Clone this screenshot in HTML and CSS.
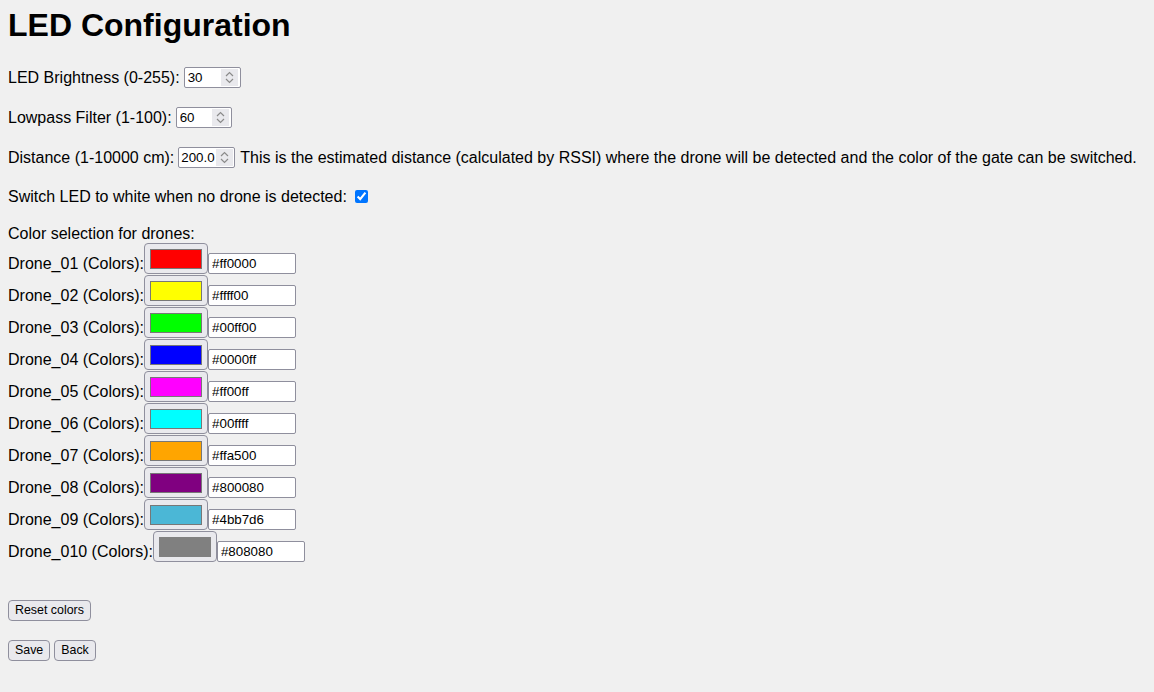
FILE: index.html
```html
<!DOCTYPE html>
<html lang="en">
<head>
<meta charset="utf-8">
<title>LED Configuration</title>
<link rel="stylesheet" href="styles.css">
</head>
<body>
<main class="page">
  <h1 class="title">LED Configuration</h1>

  <div class="row row-first">
    <label class="lbl" for="bright">LED Brightness (0-255):</label>
    <span class="num num-w57">
      <input class="num-field" id="bright" type="text" value="30">
      <svg class="spin" width="17" height="17" viewBox="0 0 17 17"><path d="M5 7 L8.5 3.5 L12 7 M5 10 L8.5 13.5 L12 10" fill="none" stroke="#8a8a8a" stroke-width="1.2"/></svg>
    </span>
  </div>

  <div class="row row-next">
    <label class="lbl" for="lowpass">Lowpass Filter (1-100):</label>
    <span class="num num-w56">
      <input class="num-field" id="lowpass" type="text" value="60">
      <svg class="spin" width="17" height="17" viewBox="0 0 17 17"><path d="M5 7 L8.5 3.5 L12 7 M5 10 L8.5 13.5 L12 10" fill="none" stroke="#8a8a8a" stroke-width="1.2"/></svg>
    </span>
  </div>

  <div class="row row-next">
    <label class="lbl" for="dist">Distance (1-10000 cm):</label>
    <span class="num num-w57 num-dist">
      <input class="num-field" id="dist" type="text" value="200.0">
      <svg class="spin" width="17" height="17" viewBox="0 0 17 17"><path d="M5 7 L8.5 3.5 L12 7 M5 10 L8.5 13.5 L12 10" fill="none" stroke="#8a8a8a" stroke-width="1.2"/></svg>
    </span>
    <span class="note">This is the estimated distance (calculated by RSSI) where the drone will be detected and the color of the gate can be switched.</span>
  </div>

  <div class="row row-check">
    <label class="lbl" for="white">Switch LED to white when no drone is detected:</label>
    <input class="check" id="white" type="checkbox" checked>
  </div>

  <div class="section-label">Color selection for drones:</div>

  <div class="drones">
    <div class="drone"><span class="dlbl">Drone_01 (Colors):</span><button class="swatch-btn" type="button"><span class="swatch" style="background:#ff0000"></span></button><input class="hex" type="text" value="#ff0000"></div>
    <div class="drone"><span class="dlbl">Drone_02 (Colors):</span><button class="swatch-btn" type="button"><span class="swatch" style="background:#ffff00"></span></button><input class="hex" type="text" value="#ffff00"></div>
    <div class="drone"><span class="dlbl">Drone_03 (Colors):</span><button class="swatch-btn" type="button"><span class="swatch" style="background:#00ff00"></span></button><input class="hex" type="text" value="#00ff00"></div>
    <div class="drone"><span class="dlbl">Drone_04 (Colors):</span><button class="swatch-btn" type="button"><span class="swatch" style="background:#0000ff"></span></button><input class="hex" type="text" value="#0000ff"></div>
    <div class="drone"><span class="dlbl">Drone_05 (Colors):</span><button class="swatch-btn" type="button"><span class="swatch" style="background:#ff00ff"></span></button><input class="hex" type="text" value="#ff00ff"></div>
    <div class="drone"><span class="dlbl">Drone_06 (Colors):</span><button class="swatch-btn" type="button"><span class="swatch" style="background:#00ffff"></span></button><input class="hex" type="text" value="#00ffff"></div>
    <div class="drone"><span class="dlbl">Drone_07 (Colors):</span><button class="swatch-btn" type="button"><span class="swatch" style="background:#ffa500"></span></button><input class="hex" type="text" value="#ffa500"></div>
    <div class="drone"><span class="dlbl">Drone_08 (Colors):</span><button class="swatch-btn" type="button"><span class="swatch" style="background:#800080"></span></button><input class="hex" type="text" value="#800080"></div>
    <div class="drone"><span class="dlbl">Drone_09 (Colors):</span><button class="swatch-btn" type="button"><span class="swatch" style="background:#4bb7d6"></span></button><input class="hex" type="text" value="#4bb7d6"></div>
    <div class="drone"><span class="dlbl">Drone_010 (Colors):</span><button class="swatch-btn" type="button"><span class="swatch swatch-plain" style="background:#808080"></span></button><input class="hex" type="text" value="#808080"></div>
  </div>

  <div class="actions actions-reset">
    <button class="btn" type="button">Reset colors</button>
  </div>
  <div class="actions actions-save">
    <button class="btn" type="button">Save</button>
    <button class="btn" type="button">Back</button>
  </div>
</main>
</body>
</html>
```

FILE: styles.css
```css
* { box-sizing: border-box; }

html, body {
  margin: 0;
  padding: 0;
  background: #f0f0f0;
}

body {
  font-family: "Liberation Sans", Arial, sans-serif;
  font-size: 16px;
  color: #000;
}

.page {
  display: flex;
  flex-direction: column;
  align-items: flex-start;
  padding: 7px 8px 20px 8px;
}

.title {
  margin: 0;
  font-size: 32px;
  font-weight: bold;
  line-height: 37px;
}

.row {
  display: flex;
  align-items: center;
  height: 21px;
  white-space: nowrap;
}

.row-first { margin-top: 23px; }
.row-next { margin-top: 19px; }
.row-check { margin-top: 18px; }

.lbl {
  line-height: 18px;
  padding-top: 1px;
}

.num {
  display: flex;
  align-items: center;
  height: 21px;
  margin-left: 4px;
  background: #fff;
  border: 1px solid #8f8f9d;
  border-radius: 2px;
  padding: 0 2px 0 3px;
}

.num-w57 { width: 57px; }
.num-w56 { width: 56px; }
.num-dist { padding: 0 1px 0 2px; }

.num-field {
  flex: 1 1 auto;
  min-width: 0;
  width: 10px;
  border: 0;
  padding: 0;
  margin: 0;
  background: transparent;
  font-family: "Liberation Sans", Arial, sans-serif;
  font-size: 13.33px;
  color: #000;
  outline: none;
}

.spin {
  flex: 0 0 auto;
  display: block;
  background: #e9e9ed;
}

.note {
  margin-left: 5px;
  line-height: 18px;
  padding-top: 1px;
}

.check {
  width: 13px;
  height: 13px;
  margin: 0 0 0 8px;
  accent-color: #0075ff;
}

.section-label {
  margin-top: 18px;
  line-height: 18px;
  height: 18px;
}

.drones {
  display: flex;
  flex-direction: column;
  margin-top: 0;
}

.drone {
  display: flex;
  align-items: flex-start;
  height: 32px;
  white-space: nowrap;
}

.dlbl {
  padding-top: 11.5px;
  line-height: 18px;
}

.swatch-btn {
  width: 64px;
  height: 31px;
  margin: 0;
  padding: 5px 5px 4px 5px;
  background: #e9e9ed;
  border: 1px solid #8f8f9d;
  border-radius: 4px;
  display: flex;
  align-items: flex-start;
}

.swatch {
  display: block;
  width: 52px;
  height: 20px;
  border: 1px solid #777;
}

.swatch-plain { border-color: #808080; }

.hex {
  margin: 10px 0 0 0;
  width: 88px;
  height: 21px;
  padding: 0 3px;
  background: #fff;
  border: 1px solid #8f8f9d;
  border-radius: 2px;
  font-family: "Liberation Sans", Arial, sans-serif;
  font-size: 13.33px;
  color: #000;
  outline: none;
}

.actions {
  display: flex;
  gap: 4px;
}

.actions-reset { margin-top: 37px; }
.actions-save { margin-top: 19px; }

.btn {
  height: 21px;
  margin: 0;
  padding: 0 6px;
  background: #e9e9ed;
  border: 1px solid #8f8f9d;
  border-radius: 4px;
  font-family: "Liberation Sans", Arial, sans-serif;
  font-size: 12.4px;
  color: #000;
  line-height: 19px;
}
```
